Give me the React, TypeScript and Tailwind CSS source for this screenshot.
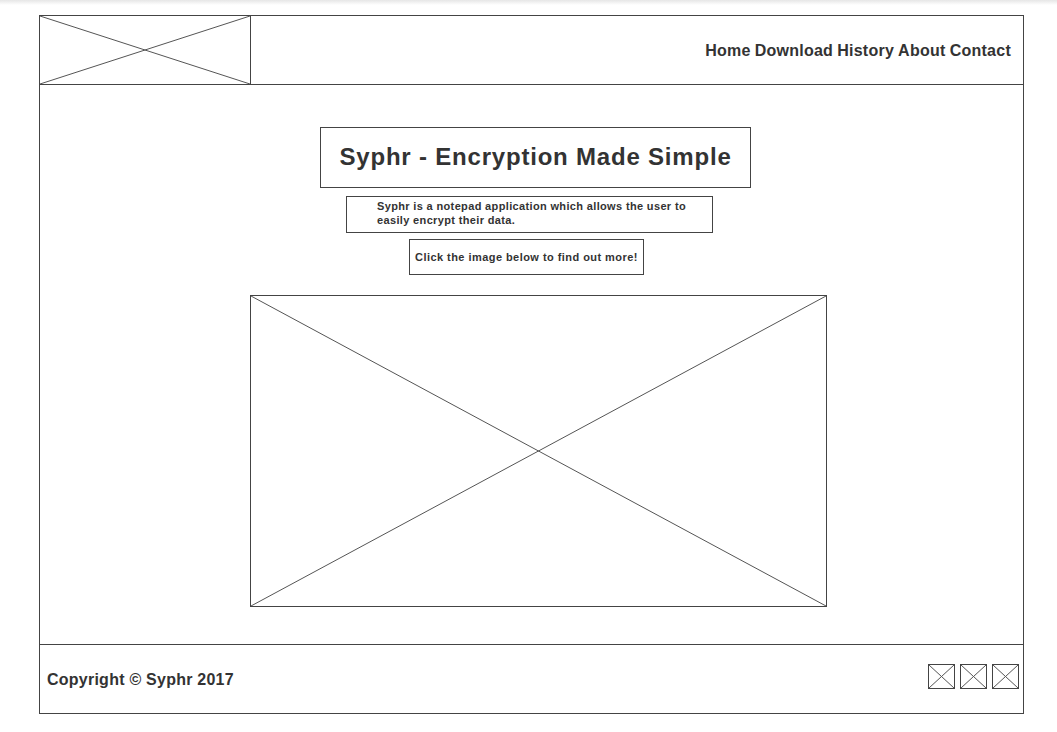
import React from "react";

function XBox({ className }: { className?: string }) {
    return (
        <div className={"relative border border-[#444] " + (className ?? "")}>
            <svg className="absolute inset-0 w-full h-full" preserveAspectRatio="none" viewBox="0 0 100 100">
                <line x1="0" y1="0" x2="100" y2="100" stroke="#555" strokeWidth="1" vectorEffect="non-scaling-stroke" />
                <line x1="100" y1="0" x2="0" y2="100" stroke="#555" strokeWidth="1" vectorEffect="non-scaling-stroke" />
            </svg>
        </div>
    );
}

export default function App() {
    const navItems = ["Home", "Download", "History", "About", "Contact"];

    return (
        <div className="w-[1057px] h-[732px] bg-white text-[#333] font-['Liberation_Sans',Arial,sans-serif]">
            <div className="h-[5px] bg-gradient-to-b from-[#e6e6e6] to-white" />
            <div className="ml-[39px] mt-[10px] w-[985px] h-[699px] border border-[#444] flex flex-col">
                {/* header */}
                <div className="h-[69px] shrink-0 flex border-b border-[#444]">
                    <XBox className="w-[211px] h-full border-0 border-r" />
                    <nav className="flex-1 flex items-center justify-end pr-[12px] pt-[1px] gap-[4px] text-[16px] font-bold tracking-[0.26px]">
                        {navItems.map((n) => (
                            <span key={n}>{n}</span>
                        ))}
                    </nav>
                </div>

                {/* main */}
                <div className="flex-1 flex flex-col items-start">
                    <div className="ml-[280px] mt-[42px] w-[431px] h-[61px] border border-[#444] flex items-center justify-center">
                        <h1 className="text-[24px] font-bold leading-none pb-[2px] tracking-[0.8px]">Syphr - Encryption Made Simple</h1>
                    </div>
                    <div className="ml-[306px] mt-[8px] w-[367px] h-[37px] border border-[#444] pl-[30px] pt-[2px] text-[11px] font-bold leading-[14px] tracking-[0.35px]">
                        Syphr is a notepad application which allows the user to
                        <br />
                        easily encrypt their data.
                    </div>
                    <div className="ml-[369px] mt-[6px] w-[235px] h-[36px] border border-[#444] pl-[5px] flex items-center text-[11px] font-bold tracking-[0.45px]">
                        Click the image below to find out more!
                    </div>
                    <XBox className="ml-[210px] mt-[20px] w-[577px] h-[312px]" />
                </div>

                {/* footer */}
                <div className="h-[69px] shrink-0 border-t border-[#444] flex items-center justify-between pl-[7px] pr-[4px]">
                    <span className="text-[16px] font-bold tracking-[0.24px] pt-[1px]">Copyright © Syphr 2017</span>
                    <div className="flex gap-[5px] mb-[5px]">
                        <XBox className="w-[27px] h-[25px]" />
                        <XBox className="w-[27px] h-[25px]" />
                        <XBox className="w-[27px] h-[25px]" />
                    </div>
                </div>
            </div>
        </div>
    );
}
